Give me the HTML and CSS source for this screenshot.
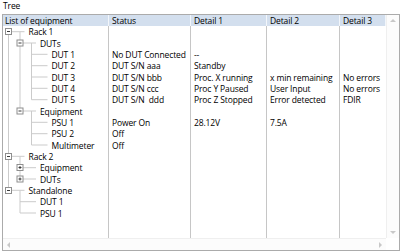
FILE: index.html
```html
<!DOCTYPE html>
<html lang="en">
<head>
    <meta charset="UTF-8">
    <title>Tree</title>
    <link rel="stylesheet" href="styles.css">
</head>
<body>
    <div class="panel">
        <div class="title">Tree</div>
        <div class="view">
            <div class="main">
                <div class="grid">
                    <div class="row head">
                        <div>List of equipment</div>
                        <div>Status</div>
                        <div>Detail 1</div>
                        <div>Detail 2</div>
                        <div>Detail 3</div>
                    </div>
                    <div class="body">
                        <svg class="branches" width="106" height="200" viewBox="0 0 106 200">
                            <g stroke="#cbcbcb" stroke-width="1" fill="none">
                                <!-- sibling connectors -->
                                <line x1="5.5" y1="5.7" x2="5.5" y2="164.3"/>
                                <line x1="17" y1="5.7" x2="17" y2="85"/>
                                <line x1="28.5" y1="17" x2="28.5" y2="73.7"/>
                                <line x1="28.5" y1="85" x2="28.5" y2="119"/>
                                <line x1="17" y1="130.3" x2="17" y2="153"/>
                                <line x1="17" y1="164.3" x2="17" y2="187"/>
                                <!-- item stubs -->
                                <line x1="5.5" y1="5.7" x2="21.5" y2="5.7"/>
                                <line x1="17" y1="17" x2="33" y2="17"/>
                                <line x1="28.5" y1="28.3" x2="44.5" y2="28.3"/>
                                <line x1="28.5" y1="39.7" x2="44.5" y2="39.7"/>
                                <line x1="28.5" y1="51" x2="44.5" y2="51"/>
                                <line x1="28.5" y1="62.3" x2="44.5" y2="62.3"/>
                                <line x1="28.5" y1="73.7" x2="44.5" y2="73.7"/>
                                <line x1="17" y1="85" x2="33" y2="85"/>
                                <line x1="28.5" y1="96.3" x2="44.5" y2="96.3"/>
                                <line x1="28.5" y1="107.7" x2="44.5" y2="107.7"/>
                                <line x1="28.5" y1="119" x2="44.5" y2="119"/>
                                <line x1="5.5" y1="130.3" x2="21.5" y2="130.3"/>
                                <line x1="17" y1="141.7" x2="33" y2="141.7"/>
                                <line x1="17" y1="153" x2="33" y2="153"/>
                                <line x1="5.5" y1="164.3" x2="21.5" y2="164.3"/>
                                <line x1="17" y1="175.7" x2="33" y2="175.7"/>
                                <line x1="17" y1="187" x2="33" y2="187"/>
                            </g>
                            <g stroke="#8e8e8e" fill="#fff">
                                <rect x="2.5" y="2.5" width="6" height="6"/>
                                <rect x="14" y="14" width="6" height="6"/>
                                <rect x="14" y="82" width="6" height="6"/>
                                <rect x="2.5" y="127.5" width="6" height="6"/>
                                <rect x="14" y="138.5" width="6" height="6"/>
                                <rect x="14" y="150" width="6" height="6"/>
                                <rect x="2.5" y="161.5" width="6" height="6"/>
                            </g>
                            <g stroke="#3a3a3a">
                                <line x1="4" y1="5.5" x2="7" y2="5.5"/>
                                <line x1="15.5" y1="17" x2="18.5" y2="17"/>
                                <line x1="15.5" y1="85" x2="18.5" y2="85"/>
                                <line x1="4" y1="130.5" x2="7" y2="130.5"/>
                                <line x1="15.5" y1="141.5" x2="18.5" y2="141.5"/>
                                <line x1="17" y1="140" x2="17" y2="143"/>
                                <line x1="15.5" y1="153" x2="18.5" y2="153"/>
                                <line x1="17" y1="151.5" x2="17" y2="154.5"/>
                                <line x1="4" y1="164.5" x2="7" y2="164.5"/>
                            </g>
                        </svg>

                        <div class="row"><div class="lvl0">Rack 1</div><div></div><div></div><div></div><div></div></div>
                        <div class="row"><div class="lvl1">DUTs</div><div></div><div></div><div></div><div></div></div>
                        <div class="row"><div class="lvl2">DUT 1</div><div>No DUT Connected</div><div>--</div><div></div><div></div></div>
                        <div class="row"><div class="lvl2">DUT 2</div><div>DUT S/N aaa</div><div>Standby</div><div></div><div></div></div>
                        <div class="row"><div class="lvl2">DUT 3</div><div>DUT S/N bbb</div><div>Proc. X running</div><div>x min remaining</div><div>No errors</div></div>
                        <div class="row"><div class="lvl2">DUT 4</div><div>DUT S/N ccc</div><div>Proc Y Paused</div><div>User Input</div><div>No errors</div></div>
                        <div class="row"><div class="lvl2">DUT 5</div><div>DUT S/N  ddd</div><div>Proc Z Stopped</div><div>Error detected</div><div>FDIR</div></div>
                        <div class="row"><div class="lvl1">Equipment</div><div></div><div></div><div></div><div></div></div>
                        <div class="row"><div class="lvl2">PSU 1</div><div>Power On</div><div>28.12V</div><div>7.5A</div><div></div></div>
                        <div class="row"><div class="lvl2">PSU 2</div><div>Off</div><div></div><div></div><div></div></div>
                        <div class="row"><div class="lvl2">Multimeter</div><div>Off</div><div></div><div></div><div></div></div>
                        <div class="row"><div class="lvl0">Rack 2</div><div></div><div></div><div></div><div></div></div>
                        <div class="row"><div class="lvl1">Equipment</div><div></div><div></div><div></div><div></div></div>
                        <div class="row"><div class="lvl1">DUTs</div><div></div><div></div><div></div><div></div></div>
                        <div class="row"><div class="lvl0">Standalone</div><div></div><div></div><div></div><div></div></div>
                        <div class="row"><div class="lvl1">DUT 1</div><div></div><div></div><div></div><div></div></div>
                        <div class="row"><div class="lvl1">PSU 1</div><div></div><div></div><div></div><div></div></div>
                    </div>
                </div>
                <div class="vscroll">
                    <span class="arrow up"></span>
                    <span class="arrow down"></span>
                </div>
            </div>
            <div class="hscroll">
                <div class="track">
                    <span class="arrow left"></span>
                    <span class="arrow right"></span>
                </div>
                <div class="corner"></div>
            </div>
        </div>
    </div>
</body>
</html>
```

FILE: styles.css
```css
body {
    margin: 0;
    font-family: "Open Sans", "Segoe UI", sans-serif;
    font-size: 8.5px;
    letter-spacing: -0.12px;
    color: #000;
    background: #fff;
}
.panel {
    padding-left: 2px;
}
.title {
    height: 14px;
    line-height: 12px;
    padding-left: 1px;
}
.view {
    width: 396px;
    height: 235px;
    border: 1px solid #ababab;
    display: flex;
    flex-direction: column;
}
.main {
    flex: 1;
    display: flex;
    min-height: 0;
}
.grid {
    width: 383px;
    display: flex;
    flex-direction: column;
}
.row {
    display: grid;
    grid-template-columns: 106px 82px 76px 73px 46px;
    height: 11.333px;
    line-height: 11.333px;
    white-space: pre;
}
.row > div {
    padding-left: 3px;
    overflow: hidden;
}
.head {
    background: #d3dfee;
}
.head > div {
    border-right: 1px solid #f2f6fb;
}
.head > div:first-child {
    padding-left: 2px;
}
.body {
    flex: 1;
    position: relative;
    background:
        linear-gradient(#c6c6c6, #c6c6c6) 105px 0 / 1px 100% no-repeat,
        linear-gradient(#c6c6c6, #c6c6c6) 187px 0 / 1px 100% no-repeat,
        linear-gradient(#c6c6c6, #c6c6c6) 263px 0 / 1px 100% no-repeat,
        linear-gradient(#c6c6c6, #c6c6c6) 336px 0 / 1px 100% no-repeat;
}
.branches {
    position: absolute;
    left: 0;
    top: 0;
    pointer-events: none;
}
.row > .lvl0 { padding-left: 25.5px; }
.row > .lvl1 { padding-left: 37px; }
.row > .lvl2 { padding-left: 48.5px; }

.vscroll {
    width: 12px;
    border-left: 1px solid #efefef;
    background: #fcfcfc;
    display: flex;
    flex-direction: column;
    justify-content: space-between;
    align-items: center;
    padding: 4px 0 4px;
}
.hscroll {
    height: 12px;
    display: flex;
}
.track {
    width: 383px;
    border-top: 1px solid #efefef;
    background: #fcfcfc;
    display: flex;
    justify-content: space-between;
    align-items: center;
    padding: 0 4px;
    box-sizing: border-box;
}
.corner {
    flex: 1;
    background: #fff;
}
.arrow {
    width: 0;
    height: 0;
    border: 3px solid transparent;
}
.up {
    border-bottom: 3px solid #c8c8c8;
    border-top-width: 0;
}
.down {
    border-top: 3px solid #c8c8c8;
    border-bottom-width: 0;
}
.left {
    border-right: 3px solid #c8c8c8;
    border-left-width: 0;
}
.right {
    border-left: 3px solid #c8c8c8;
    border-right-width: 0;
}
```
